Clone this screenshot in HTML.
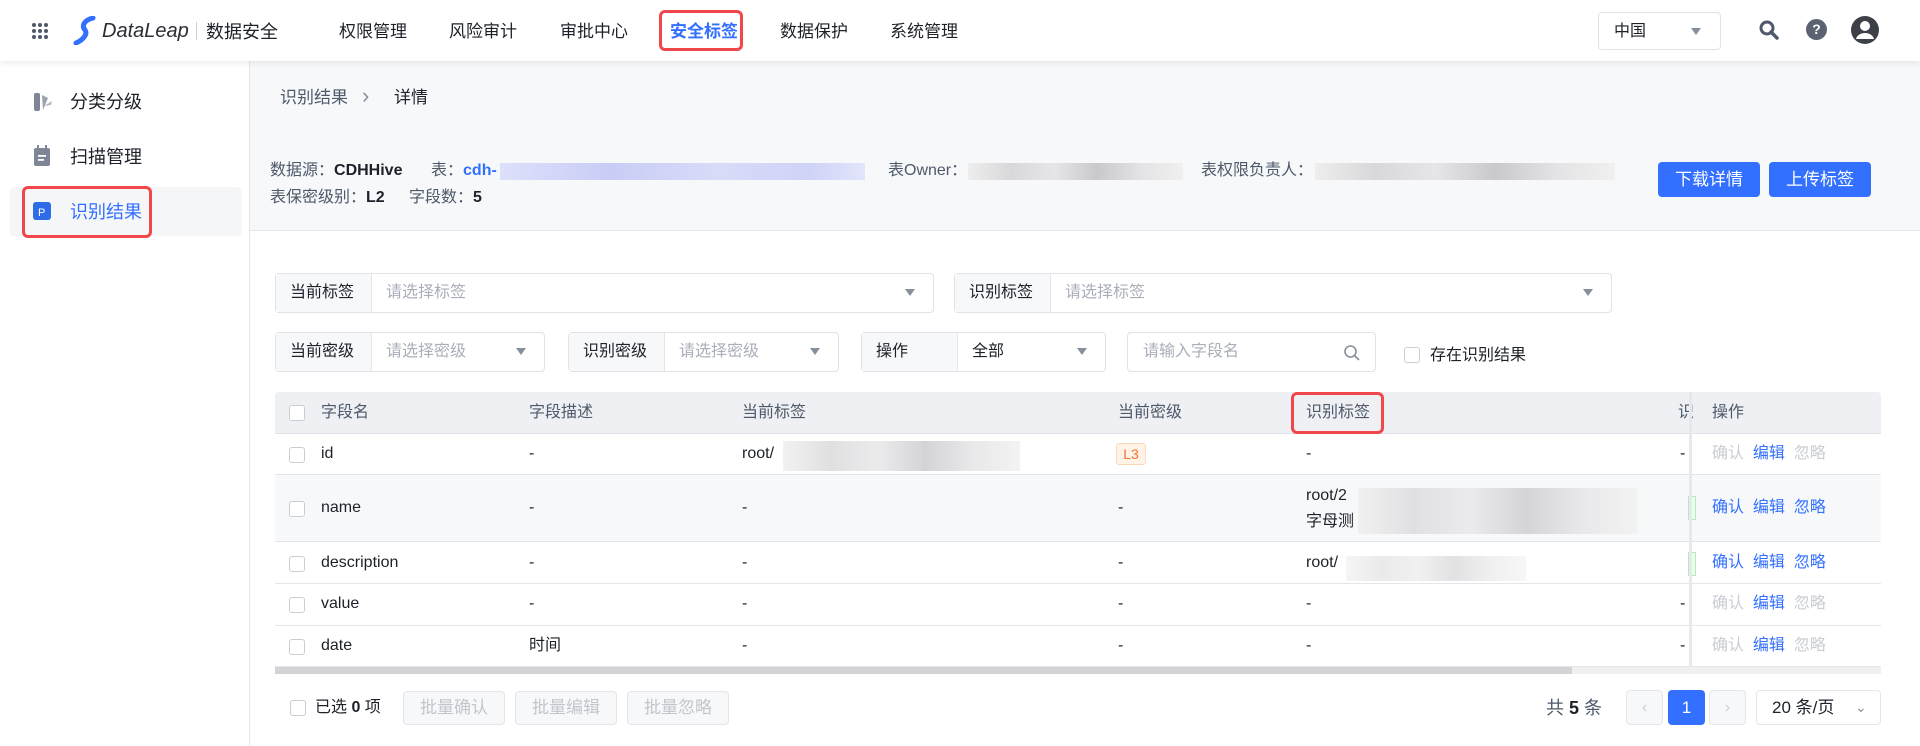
<!DOCTYPE html>
<html><head><meta charset="utf-8"><style>
*{box-sizing:border-box;margin:0;padding:0}
body{width:1920px;height:746px;overflow:hidden;background:#fff;font-family:"Liberation Sans","Noto Sans CJK SC",sans-serif;color:#1d2129;font-size:16px;line-height:20px;position:relative}
.a{position:absolute;white-space:nowrap}
.hdr{left:0;top:0;width:1920px;height:61px;background:#fff;box-shadow:0 2px 6px rgba(0,0,0,.08);z-index:5}
.nav{top:22px;font-size:17px;color:#1d2129}
.side{left:0;top:61px;width:250px;height:685px;background:#fff;border-right:1px solid #e5e6eb}
.top{left:250px;top:61px;width:1670px;height:170px;background:#f7f8fa;border-bottom:1px solid #e5e6eb}
.blur{background:linear-gradient(90deg,#eee,#d8d8da 20%,#e6e6e8 40%,#c9c9cc 60%,#e3e3e5 80%,#f0f0f0)}
.bblue{background:linear-gradient(90deg,#dde0fa,#c9cdf6 30%,#d8dbf8 60%,#cfd3f7 85%,#e3e5fb)}
.btn{height:35px;background:#3370ff;color:#fff;border-radius:4px;font-size:17px;text-align:center;line-height:35px}
.sel{height:40px;border:1px solid #e0e2e7;border-radius:4px;background:#fff}
.sel .lb{position:absolute;left:0;top:0;bottom:0;width:96px;background:#f7f8fa;border-right:1px solid #e5e6eb;padding-left:14px;line-height:38px;color:#1d2129}
.sel .ph{position:absolute;left:110px;top:0;line-height:38px;color:#a9aeb8}
.sel .ar{position:absolute;right:18px;top:15px;width:0;height:0;border-left:5px solid transparent;border-right:5px solid transparent;border-top:7px solid #86909c}
.cb{width:16px;height:16px;border:1px solid #c9cdd4;border-radius:3px;background:#fff}
.th{top:392px;height:42px;line-height:42px;color:#4e5969}
.row{left:275px;width:1606px;border-bottom:1px solid #e5e6eb}
.g{color:#c9cdd4}.b{color:#3370ff}
.fbtn{top:691px;height:34px;width:102px;border:1px solid #e5e6eb;border-radius:4px;background:#f7f8fa;color:#c2c6cc;text-align:center;line-height:32px;font-size:17px}
</style></head><body>
<div class="a hdr">
 <svg class="a" style="left:31px;top:22px" width="18" height="18"><g fill="#4e5969"><circle cx="3" cy="3" r="2"/><circle cx="9" cy="3" r="2"/><circle cx="15" cy="3" r="2"/><circle cx="3" cy="9" r="2"/><circle cx="9" cy="9" r="2"/><circle cx="15" cy="9" r="2"/><circle cx="3" cy="15" r="2"/><circle cx="9" cy="15" r="2"/><circle cx="15" cy="15" r="2"/></g></svg>
 <svg class="a" style="left:73px;top:16px" width="26" height="29"><path d="M20 2 C12 4 8 9 12 14 C15 18 10 24 3 27" stroke="#3370ff" stroke-width="5" fill="none" stroke-linecap="round"/></svg>
 <div class="a" style="left:102px;top:20px;font-size:20px;line-height:22px;font-style:italic;color:#2a2d33">DataLeap</div>
 <div class="a" style="left:196px;top:22px;width:1px;height:18px;background:#d0d3d6"></div>
 <div class="a" style="left:206px;top:22px;font-size:18px">数据安全</div>
 <div class="a nav" style="left:339px">权限管理</div>
 <div class="a nav" style="left:449px">风险审计</div>
 <div class="a nav" style="left:560px">审批中心</div>
 <div class="a nav" style="left:670px;color:#3370ff;font-weight:bold">安全标签</div>
 <div class="a" style="left:659px;top:10px;width:84px;height:41px;border:3px solid #f0474a;border-radius:6px"></div>
 <div class="a nav" style="left:780px">数据保护</div>
 <div class="a nav" style="left:890px">系统管理</div>
 <div class="a" style="left:1598px;top:12px;width:123px;height:38px;border:1px solid #e0e2e7;border-radius:4px"><span class="a" style="left:15px;top:9px;font-size:16px">中国</span><span class="a" style="left:92px;top:15px;border-left:5px solid transparent;border-right:5px solid transparent;border-top:7px solid #86909c"></span></div>
 <svg class="a" style="left:1758px;top:19px" width="22" height="22"><circle cx="9" cy="9" r="6" stroke="#4e5969" stroke-width="3" fill="none"/><path d="M13 13 L19 19" stroke="#4e5969" stroke-width="3.5" stroke-linecap="round"/></svg>
 <div class="a" style="left:1806px;top:19px;width:21px;height:21px;border-radius:50%;background:#5c6370;color:#fff;font-size:14px;font-weight:bold;text-align:center;line-height:21px">?</div>
 <svg class="a" style="left:1851px;top:16px" width="28" height="28"><circle cx="14" cy="14" r="14" fill="#3d4047"/><circle cx="14" cy="10" r="5" fill="#fff"/><path d="M5 23 C7 15 21 15 23 23 Z" fill="#fff"/></svg>
</div>
<div class="a side"></div>
<div class="a" style="left:10px;top:187px;width:232px;height:49px;background:#f5f6f8;border-radius:4px"></div>
<svg class="a" style="left:33px;top:92px" width="20" height="20"><rect x="1" y="1" width="6" height="18" rx="2" fill="#7d8596"/><path d="M9 3 L15 6 L10 18 Z" fill="#9aa1af"/><path d="M11 14 L19 9 L18 13 Z" fill="#b4b9c3"/></svg>
<div class="a" style="left:70px;top:92px;font-size:18px">分类分级</div>
<svg class="a" style="left:33px;top:145px" width="18" height="22"><rect x="1" y="3" width="16" height="18" rx="2" fill="#7d8596"/><rect x="4" y="0" width="2" height="5" fill="#7d8596"/><rect x="12" y="0" width="2" height="5" fill="#7d8596"/><rect x="5" y="10" width="8" height="1.8" fill="#fff"/><rect x="5" y="14" width="6" height="1.8" fill="#fff"/></svg>
<div class="a" style="left:70px;top:147px;font-size:18px">扫描管理</div>
<svg class="a" style="left:32px;top:201px" width="20" height="20"><rect x="1" y="1" width="18" height="18" rx="3" fill="#2e6be6"/><text x="6" y="15" fill="#fff" font-size="11" font-family="Liberation Sans">P</text></svg>
<div class="a" style="left:70px;top:202px;font-size:18px;color:#3370ff">识别结果</div>
<div class="a" style="left:22px;top:186px;width:130px;height:52px;border:3px solid #f0474a;border-radius:6px"></div>

<div class="a top"></div>
<div class="a" style="left:280px;top:88px;font-size:17px;color:#4e5969">识别结果</div>
<div class="a" style="left:362px;top:86px;font-size:22px;color:#86909c">›</div>
<div class="a" style="left:394px;top:88px;font-size:17px;color:#1d2129">详情</div>
<div class="a" style="left:270px;top:161px;font-size:16px;color:#4e5969">数据源：<b style="color:#1d2129">CDHHive</b></div>
<div class="a" style="left:431px;top:161px;font-size:16px;color:#4e5969">表：<b style="color:#3370ff">cdh-</b></div>
<div class="a bblue" style="left:500px;top:163px;width:365px;height:17px"></div>
<div class="a" style="left:888px;top:161px;font-size:16px;color:#4e5969">表Owner：</div>
<div class="a blur" style="left:968px;top:163px;width:215px;height:17px"></div>
<div class="a" style="left:1201px;top:161px;font-size:16px;color:#4e5969">表权限负责人：</div>
<div class="a blur" style="left:1315px;top:163px;width:300px;height:17px"></div>
<div class="a" style="left:270px;top:188px;font-size:16px;color:#4e5969">表保密级别：<b style="color:#1d2129">L2</b></div>
<div class="a" style="left:409px;top:188px;font-size:16px;color:#4e5969">字段数：<b style="color:#1d2129">5</b></div>
<div class="a btn" style="left:1658px;top:162px;width:102px">下载详情</div>
<div class="a btn" style="left:1769px;top:162px;width:102px">上传标签</div>

<div class="a sel" style="left:275px;top:273px;width:659px"><div class="lb">当前标签</div><div class="ph">请选择标签</div><div class="ar"></div></div>
<div class="a sel" style="left:954px;top:273px;width:658px"><div class="lb">识别标签</div><div class="ph">请选择标签</div><div class="ar"></div></div>
<div class="a sel" style="left:275px;top:332px;width:270px"><div class="lb">当前密级</div><div class="ph">请选择密级</div><div class="ar"></div></div>
<div class="a sel" style="left:568px;top:332px;width:271px"><div class="lb">识别密级</div><div class="ph">请选择密级</div><div class="ar"></div></div>
<div class="a sel" style="left:861px;top:332px;width:245px"><div class="lb">操作</div><div class="ph" style="color:#1d2129">全部</div><div class="ar"></div></div>
<div class="a sel" style="left:1127px;top:332px;width:249px"><div class="ph" style="left:15px">请输入字段名</div>
 <svg class="a" style="right:14px;top:11px" width="18" height="18"><circle cx="7.5" cy="7.5" r="5.5" stroke="#86909c" stroke-width="1.6" fill="none"/><path d="M11.5 11.5 L16 16" stroke="#86909c" stroke-width="1.8"/></svg></div>
<div class="a cb" style="left:1404px;top:347px"></div>
<div class="a" style="left:1430px;top:346px;font-size:16px;color:#1d2129">存在识别结果</div>

<div class="a" style="left:275px;top:392px;width:1606px;height:42px;background:#eef0f4;border-radius:4px 4px 0 0;border-bottom:1px solid #e0e2e7"></div>
<div class="a cb" style="left:289px;top:405px"></div>
<div class="a th" style="left:321px">字段名</div>
<div class="a th" style="left:529px">字段描述</div>
<div class="a th" style="left:742px">当前标签</div>
<div class="a th" style="left:1118px">当前密级</div>
<div class="a th" style="left:1306px">识别标签</div>
<div class="a th" style="left:1678px">识</div>
<div class="a" style="left:1291px;top:392px;width:93px;height:42px;border:3px solid #f0474a;border-radius:6px"></div>

<div class="a row" style="top:434px;height:41px"></div>
<div class="a row" style="top:475px;height:67px;background:#f7f8fa"></div>
<div class="a row" style="top:542px;height:42px"></div>
<div class="a row" style="top:584px;height:42px"></div>
<div class="a row" style="top:626px;height:41px"></div>
<div class="a" style="left:275px;top:667px;width:1606px;height:7px;background:#f0f0f0"><div style="width:1297px;height:7px;background:#d4d4d6"></div></div>

<div class="a cb" style="left:289px;top:447px"></div><div class="a" style="left:321px;top:444px">id</div><div class="a" style="left:529px;top:444px">-</div><div class="a" style="left:742px;top:444px">root/</div><div class="a blur" style="left:783px;top:441px;width:237px;height:30px;opacity:.8"></div>
<div class="a" style="left:1116px;top:443px;width:30px;height:22px;background:#fff3e8;border:1px solid #fcd9b8;border-radius:3px;color:#f77234;font-size:14px;text-align:center;line-height:20px">L3</div>
<div class="a" style="left:1306px;top:444px">-</div><div class="a" style="left:1680px;top:444px">-</div>

<div class="a cb" style="left:289px;top:501px"></div><div class="a" style="left:321px;top:498px">name</div><div class="a" style="left:529px;top:498px">-</div><div class="a" style="left:742px;top:498px">-</div><div class="a" style="left:1118px;top:498px">-</div>
<div class="a" style="left:1306px;top:486px">root/2</div><div class="a" style="left:1306px;top:512px">字母测</div><div class="a blur" style="left:1358px;top:488px;width:280px;height:46px;opacity:.75"></div>
<div class="a" style="left:1688px;top:496px;width:8px;height:24px;border:1px solid #b8e6c4;background:#e8ffea"></div>

<div class="a cb" style="left:289px;top:556px"></div><div class="a" style="left:321px;top:553px">description</div><div class="a" style="left:529px;top:553px">-</div><div class="a" style="left:742px;top:553px">-</div><div class="a" style="left:1118px;top:553px">-</div>
<div class="a" style="left:1306px;top:553px">root/</div><div class="a blur" style="left:1346px;top:556px;width:180px;height:25px;opacity:.55"></div>
<div class="a" style="left:1688px;top:552px;width:8px;height:24px;border:1px solid #b8e6c4;background:#e8ffea"></div>

<div class="a cb" style="left:289px;top:597px"></div><div class="a" style="left:321px;top:594px">value</div><div class="a" style="left:529px;top:594px">-</div><div class="a" style="left:742px;top:594px">-</div><div class="a" style="left:1118px;top:594px">-</div><div class="a" style="left:1306px;top:594px">-</div><div class="a" style="left:1680px;top:594px">-</div>
<div class="a cb" style="left:289px;top:639px"></div><div class="a" style="left:321px;top:636px">date</div><div class="a" style="left:529px;top:636px">时间</div><div class="a" style="left:742px;top:636px">-</div><div class="a" style="left:1118px;top:636px">-</div><div class="a" style="left:1306px;top:636px">-</div><div class="a" style="left:1680px;top:636px">-</div>

<div class="a" style="left:1689px;top:392px;width:3px;height:275px;background:#e6e8ec"></div>
<div class="a th" style="left:1712px">操作</div>
<div class="a" style="left:1712px;top:444px"><span class="g">确认</span>&nbsp; <span class="b">编辑</span>&nbsp; <span class="g">忽略</span></div>
<div class="a" style="left:1712px;top:498px"><span class="b">确认</span>&nbsp; <span class="b">编辑</span>&nbsp; <span class="b">忽略</span></div>
<div class="a" style="left:1712px;top:553px"><span class="b">确认</span>&nbsp; <span class="b">编辑</span>&nbsp; <span class="b">忽略</span></div>
<div class="a" style="left:1712px;top:594px"><span class="g">确认</span>&nbsp; <span class="b">编辑</span>&nbsp; <span class="g">忽略</span></div>
<div class="a" style="left:1712px;top:636px"><span class="g">确认</span>&nbsp; <span class="b">编辑</span>&nbsp; <span class="g">忽略</span></div>

<div class="a cb" style="left:290px;top:700px"></div>
<div class="a" style="left:315px;top:698px">已选 <b>0</b> 项</div>
<div class="a fbtn" style="left:403px">批量确认</div>
<div class="a fbtn" style="left:515px">批量编辑</div>
<div class="a fbtn" style="left:627px">批量忽略</div>
<div class="a" style="left:1546px;top:698px;font-size:18px;color:#4e5969">共 <b style="color:#1d2129">5</b> 条</div>
<div class="a" style="left:1626px;top:690px;width:37px;height:35px;border:1px solid #e5e6eb;border-radius:4px;background:#f7f8fa;color:#c9cdd4;text-align:center;line-height:33px">&lsaquo;</div>
<div class="a" style="left:1668px;top:690px;width:37px;height:35px;border-radius:4px;background:#3370ff;color:#fff;text-align:center;line-height:35px;font-size:17px">1</div>
<div class="a" style="left:1709px;top:690px;width:37px;height:35px;border:1px solid #e5e6eb;border-radius:4px;background:#f7f8fa;color:#c9cdd4;text-align:center;line-height:33px">&rsaquo;</div>
<div class="a" style="left:1756px;top:690px;width:125px;height:35px;border:1px solid #e5e6eb;border-radius:4px;font-size:17px;line-height:33px;padding-left:15px">20 条/页<span class="a" style="left:98px;top:0;color:#86909c;font-size:14px">&#8964;</span></div>
</body></html>
